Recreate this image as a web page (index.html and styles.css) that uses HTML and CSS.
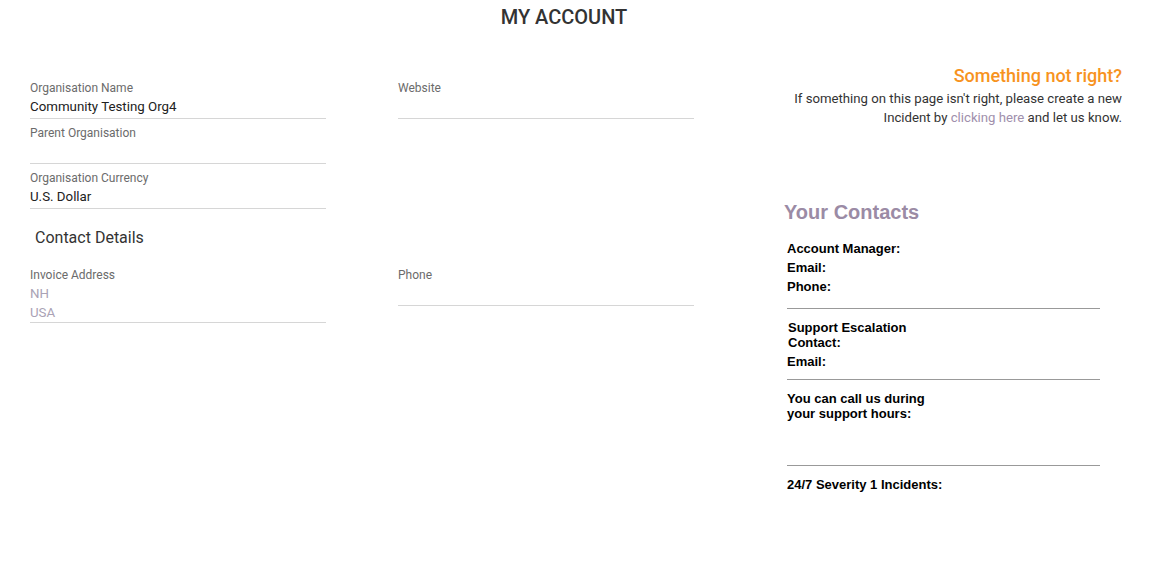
FILE: index.html
```html
<!DOCTYPE html>
<html>
<head>
  <title>My Account</title>
  <link rel="stylesheet" href="styles.css">
</head>
<body>
  <!-- Title -->
  <header class="page-title">MY ACCOUNT</header>

  <div class="account">
    <!-- Organisation details -->
    <div class="col">
      <div class="field">
        <div class="field-label">Organisation Name</div>
        <div class="field-value">Community Testing Org4</div>
      </div>
      <div class="field">
        <div class="field-label">Parent Organisation</div>
        <div class="field-value"></div>
      </div>
      <div class="field">
        <div class="field-label">Organisation Currency</div>
        <div class="field-value">U.S. Dollar</div>
      </div>

      <h2 class="section-title">Contact Details</h2>

      <div class="field address">
        <div class="field-label">Invoice Address</div>
        <div class="field-value muted">NH<br>USA</div>
      </div>
    </div>

    <div class="col">
      <div class="field">
        <div class="field-label">Website</div>
        <div class="field-value"></div>
      </div>
      <div class="spacer"></div>
      <div class="field">
        <div class="field-label">Phone</div>
        <div class="field-value"></div>
      </div>
    </div>

    <!-- Sidebar -->
    <div class="side">
      <div class="notice">
        <h3>Something not right?</h3>
        <p>If something on this page isn't right, please create a new Incident by <a href="#">clicking here</a> and let us know.</p>
      </div>

      <h2 class="contacts-title">Your Contacts</h2>

      <div class="contact-group first">
        <div class="contact-row">Account Manager:</div>
        <div class="contact-row">Email:</div>
        <div class="contact-row">Phone:</div>
      </div>
      <div class="contact-group second">
        <div class="contact-row wrap indent">Support Escalation Contact:</div>
        <div class="contact-row">Email:</div>
      </div>
      <div class="contact-group third">
        <div class="contact-row wrap wide">You can call us during your support hours:</div>
      </div>
      <div class="contact-group last">
        <div class="contact-row">24/7 Severity 1 Incidents:</div>
      </div>
    </div>
  </div>
</body>
</html>
```

FILE: styles.css
```css
/* General */
body {
    margin: 0;
    font-family: Roboto, "Liberation Sans", Arial, sans-serif;
    background: #fff;
    color: #212121;
}

.page-title {
    text-align: center;
    font-size: 20px;
    font-weight: 500;
    line-height: 24px;
    color: #333;
    padding: 5px 39px 0 0;
}

.account {
    display: grid;
    grid-template-columns: 368px 386px 1fr;
    padding: 50px 45px 0 30px;
}

.col {
    width: 296px;
}

/* Form fields */
.field {
    border-bottom: 1px solid #d6d6d6;
    padding-bottom: 2px;
    margin-bottom: 5px;
}

.field.address {
    padding-bottom: 0;
}

.field-label {
    font-size: 12px;
    line-height: 18px;
    color: #6b6b6b;
}

.field-value {
    font-size: 13.3px;
    line-height: 19px;
    min-height: 19px;
    color: #212121;
}

.field-value.muted {
    color: #aaa2b5;
}

.section-title {
    font-size: 16px;
    font-weight: 400;
    line-height: 20px;
    color: #333;
    margin: 19px 0 18px 5px;
}

.spacer {
    height: 142px;
}

/* Sidebar */
.notice {
    text-align: right;
    margin-top: -14px;
}

.notice h3 {
    margin: 0;
    font-size: 18px;
    font-weight: 500;
    line-height: 22px;
    color: #f7931e;
}

.notice p {
    margin: 2px 0 0;
    font-size: 13.2px;
    line-height: 19px;
    color: #333;
}

.notice a {
    color: #a08fac;
    text-decoration: none;
}

.contacts-title {
    margin: 74px 0 15px;
    font-family: "Liberation Sans", Arial, sans-serif;
    font-size: 20px;
    line-height: 23px;
    color: #9b8ba5;
}

.contact-group {
    width: 313px;
    margin-left: 3px;
    border-bottom: 1px solid #999;
    padding-top: 9px;
}

.contact-group.first {
    padding-top: 0;
    padding-bottom: 12px;
}

.contact-group.second {
    padding-bottom: 8px;
}

.contact-group.third {
    padding-bottom: 42px;
}

.contact-group.last {
    border-bottom: none;
}

.contact-row {
    font-family: "Liberation Sans", Arial, sans-serif;
    font-size: 13px;
    font-weight: bold;
    line-height: 15px;
    padding: 2px 0;
    color: #000;
}

.contact-row.wrap {
    width: 130px;
}

.contact-row.wide {
    width: 145px;
}

.contact-row.indent {
    padding-left: 1px;
}
```
